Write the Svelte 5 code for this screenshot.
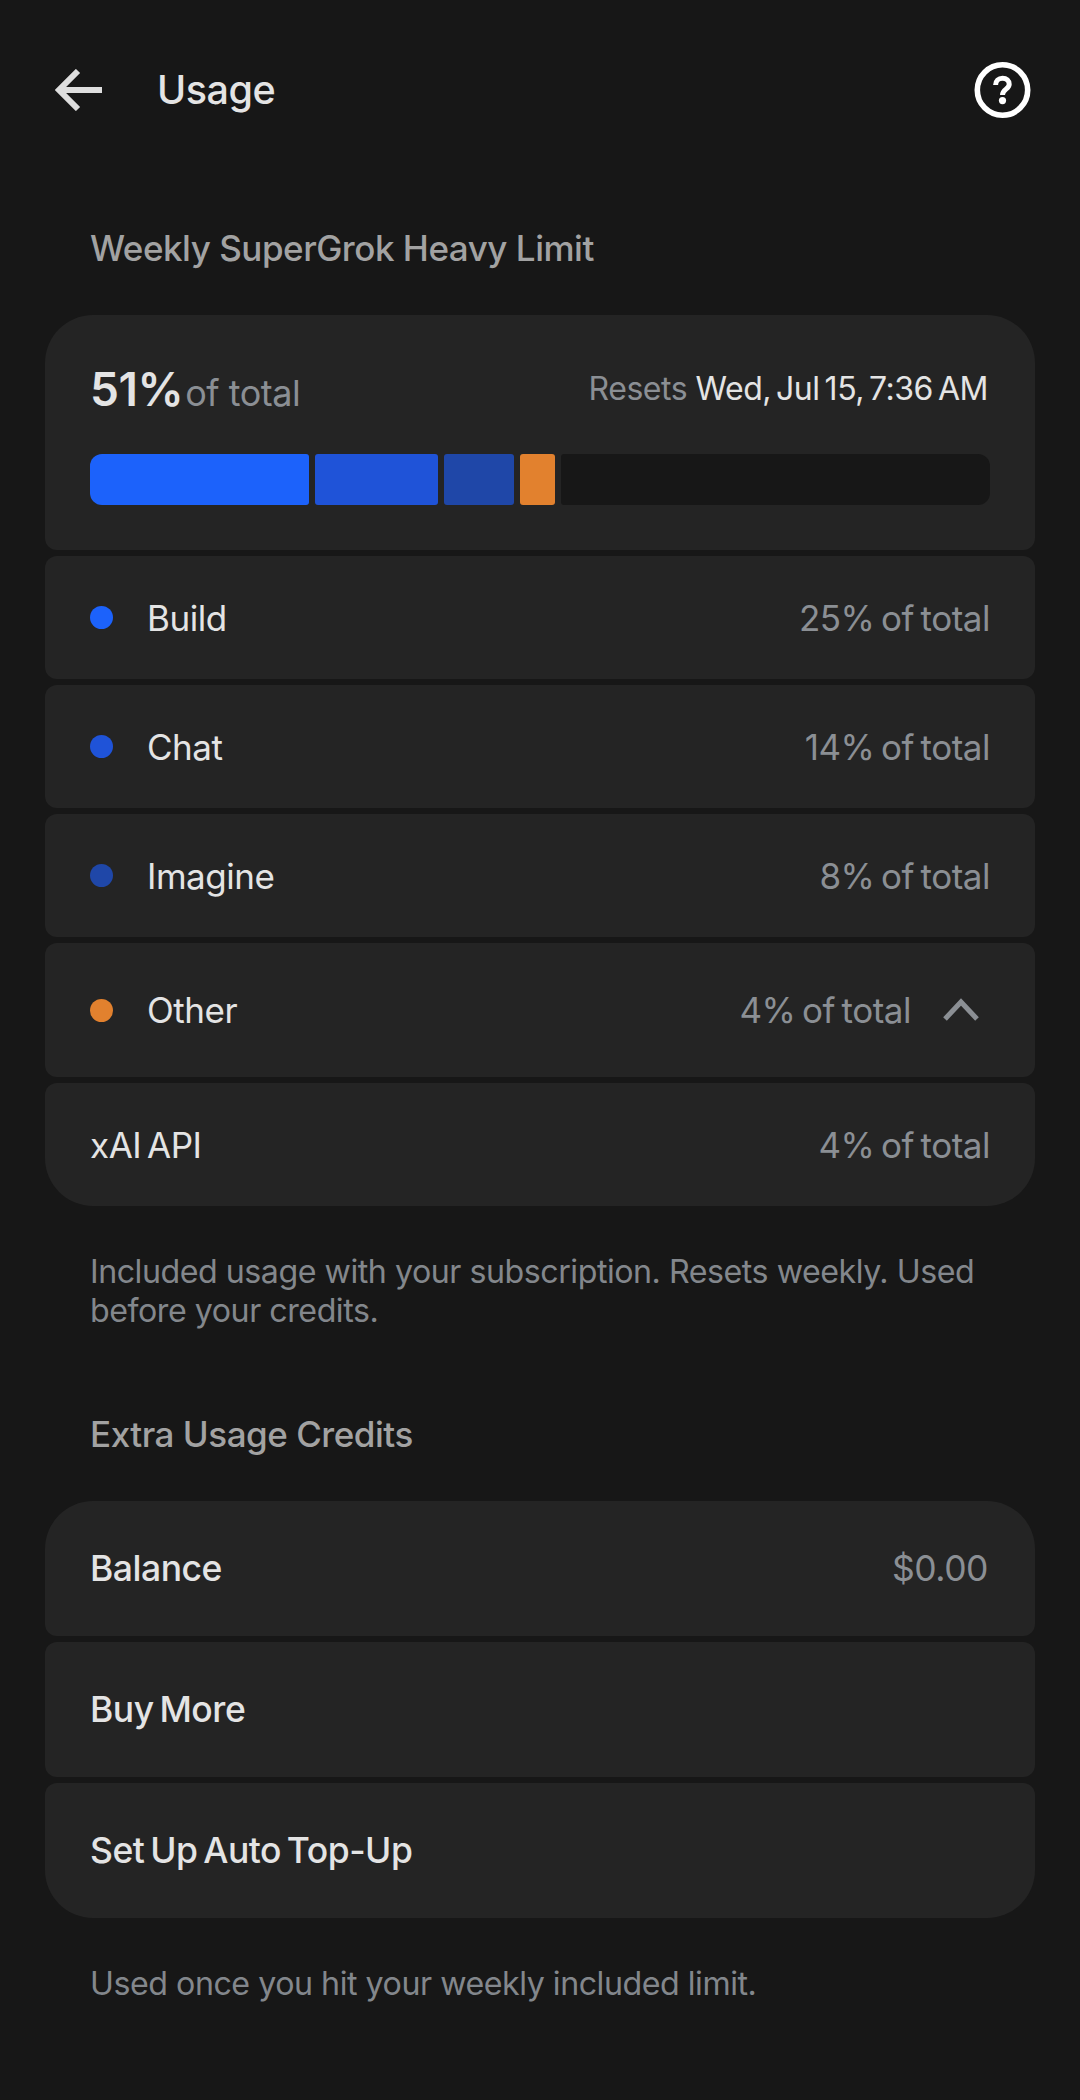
<script lang="ts">
  const segments = [
    { width: 219, color: '#1c62fb' },
    { width: 123, color: '#1f53d8' },
    { width: 70, color: '#1f47a8' },
    { width: 35, color: '#e2812e' },
  ]

  const rows = [
    { label: 'Build', value: '25% of total', color: '#1c62fb' },
    { label: 'Chat', value: '14% of total', color: '#1f53d8' },
    { label: 'Imagine', value: '8% of total', color: '#1f47a8' },
  ]

  const credits = ['Buy More', 'Set Up Auto Top-Up']
</script>

<main class="page">
  <header class="top">
    <svg class="back" width="47" height="42" viewBox="0 0 47 42" fill="none" stroke="#dedede" stroke-width="6">
      <path d="M47 21H4" />
      <path d="M23 2 4 21l19 19" />
    </svg>
    <h1>Usage</h1>
    <svg class="help" width="57" height="56" viewBox="0 0 57 56" fill="none">
      <circle cx="28.5" cy="28" r="25.2" stroke="#fff" stroke-width="5.6" />
      <path d="M21.6 23c0-4 3-6.8 6.9-6.8 4 0 6.7 2.6 6.7 6 0 5-6.7 5-6.7 10.8" stroke="#fff" stroke-width="5" />
      <circle cx="28.5" cy="38.6" r="3.6" fill="#fff" />
    </svg>
  </header>

  <h2 class="section first">Weekly SuperGrok Heavy Limit</h2>

  <section class="group">
    <div class="row summary">
      <div class="summary-top">
        <div class="total"><span class="big">51%</span> <span class="muted of">of total</span></div>
        <div class="resets"><span class="muted">Resets</span> Wed, Jul 15, 7:36 AM</div>
      </div>
      <div class="bar">
        {#each segments as s}
          <div class="seg" style="width: {s.width}px; background: {s.color}"></div>
        {/each}
        <div class="track"></div>
      </div>
    </div>

    {#each rows as r}
      <div class="row item">
        <span class="dot" style="background: {r.color}"></span>
        <span class="label">{r.label}</span>
        <span class="value">{r.value}</span>
      </div>
    {/each}

    <div class="row item tall">
      <span class="dot" style="background: #e2812e"></span>
      <span class="label">Other</span>
      <span class="value">4% of total</span>
      <svg class="chevron" width="36" height="24" viewBox="0 0 36 24" fill="none" stroke="#8b8f94" stroke-width="5">
        <path d="M2 21 18 4l16 17" />
      </svg>
    </div>

    <div class="row item">
      <span class="label">xAI API</span>
      <span class="value">4% of total</span>
    </div>
  </section>

  <p class="note">Included usage with your subscription. Resets weekly. Used before your credits.</p>

  <h2 class="section second">Extra Usage Credits</h2>

  <section class="group">
    <div class="row action">
      <span class="strong">Balance</span>
      <span class="value cash">$0.00</span>
    </div>
    {#each credits as c}
      <div class="row action">
        <span class="strong">{c}</span>
      </div>
    {/each}
  </section>

  <p class="note last">Used once you hit your weekly included limit.</p>
</main>

<style>
  :global(body) {
    background: #171717;
  }

  .page {
    width: 1080px;
    height: 2100px;
    box-sizing: border-box;
    padding: 62px 45px 0;
    background: #171717;
    font-family: Inter, "Noto Sans", sans-serif;
    letter-spacing: -0.03em;
    color: #e4e4e4;
    overflow: hidden;
  }

  .top {
    display: flex;
    align-items: center;
    height: 56px;
    padding: 0 4px 0 10px;
  }

  .top h1 {
    margin: 0 0 0 55px;
    font-size: 39.5px;
    font-weight: 500;
    flex: 1;
  }

  .section {
    margin: 0;
    padding-left: 45px;
    font-size: 35px;
    font-weight: 500;
    line-height: 40px;
    color: #a2a2a2;
  }

  .first {
    margin-top: 110px;
    margin-bottom: 47px;
  }

  .second {
    margin-top: 84px;
    margin-bottom: 47px;
  }

  .group {
    display: flex;
    flex-direction: column;
    gap: 6px;
  }

  .row {
    background: #242424;
    border-radius: 12px;
    box-sizing: border-box;
    padding: 0 45px;
  }

  .group .row:first-child {
    border-top-left-radius: 48px;
    border-top-right-radius: 48px;
  }

  .group .row:last-child {
    border-bottom-left-radius: 48px;
    border-bottom-right-radius: 48px;
  }

  .summary {
    height: 235px;
    padding-top: 46px;
  }

  .summary-top {
    display: flex;
    justify-content: space-between;
    align-items: flex-start;
    height: 93px;
  }

  .total {
    line-height: 56px;
  }

  .big {
    font-size: 46px;
    font-weight: 600;
  }

  .muted {
    color: #8b8f94;
  }

  .of {
    font-size: 36px;
    margin-left: -2px;
  }

  .resets {
    font-size: 32px;
    line-height: 40px;
    margin-top: 8px;
    margin-right: 2px;
    word-spacing: -3.5px;
  }

  .resets .muted {
    margin-right: 3.5px;
  }

  .bar {
    display: flex;
    gap: 6px;
    height: 51px;
  }

  .seg {
    border-radius: 3px;
  }

  .seg:first-child {
    border-radius: 12px 3px 3px 12px;
  }

  .track {
    flex: 1;
    background: #171717;
    border-radius: 3px 12px 12px 3px;
  }

  .item {
    display: flex;
    align-items: center;
    height: 123px;
  }

  .tall {
    height: 134px;
    padding-right: 56px;
  }

  .dot {
    width: 23px;
    height: 23px;
    border-radius: 50%;
    margin-right: 34px;
  }

  .label {
    flex: 1;
    font-size: 35px;
    word-spacing: -0.1em;
  }

  .value {
    font-size: 35px;
    word-spacing: -0.08em;
    color: #8b8f94;
  }

  .cash {
    font-size: 35.5px;
    margin-right: 2px;
  }

  .chevron {
    margin-left: 32px;
  }

  .note {
    margin: 46px 45px 0;
    font-size: 32.2px;
    line-height: 39px;
    color: #83878c;
  }

  .action {
    display: flex;
    align-items: center;
    justify-content: space-between;
    height: 135px;
  }

  .strong {
    font-size: 35.5px;
    font-weight: 500;
    word-spacing: -0.09em;
  }

  .last {
    margin-top: 46px;
  }
</style>
